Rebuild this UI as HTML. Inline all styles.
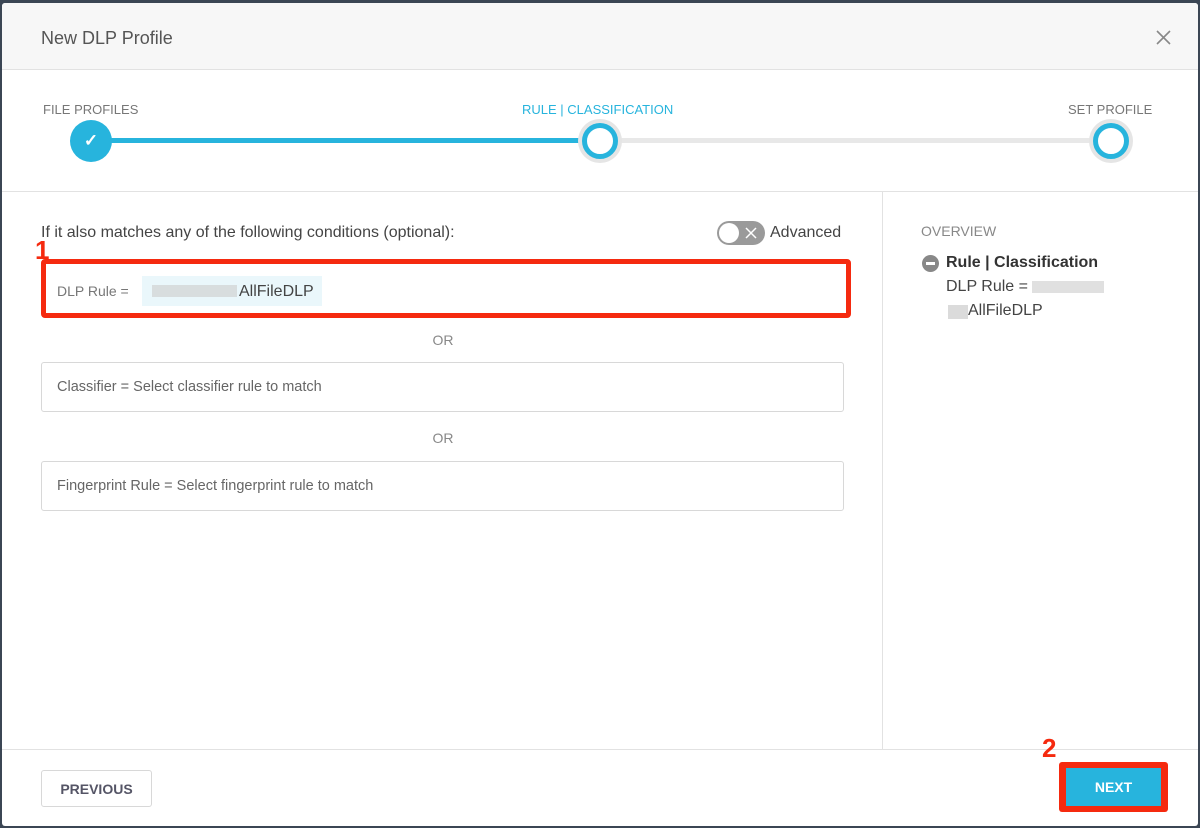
<!DOCTYPE html>
<html><head><style>
*{margin:0;padding:0;box-sizing:border-box}
body{width:1200px;height:828px;background:#3b4654;font-family:"Liberation Sans",sans-serif;position:relative;overflow:hidden}
.dlg{position:absolute;left:2px;top:3px;width:1196px;height:823px;background:#fff;border-radius:3px;overflow:hidden}
.hdr{position:absolute;left:0;top:0;width:100%;height:67px;background:#f7f7f7;border-bottom:1px solid #e2e2e2}
.abs{position:absolute}
.t{color:#555;font-size:18px}
.lbl{font-size:13px;color:#777}
.box{position:absolute;left:39px;width:803px;height:50px;border:1px solid #d8d8d8;border-radius:3px;font-size:14.5px;color:#666;padding:16px 15px}
.or{position:absolute;left:0;width:882px;text-align:center;font-size:14px;color:#888}
</style></head><body>
<div class="dlg">
<div class="hdr"></div>
<div class="abs t" style="left:39px;top:25px">New DLP Profile</div>
<svg class="abs" style="left:1154px;top:27px" width="15" height="15" viewBox="0 0 15 15"><path d="M1 1L14 14M14 1L1 14" stroke="#888" stroke-width="1.6"/></svg>
<div class="abs lbl" style="left:41px;top:99px;color:#777">FILE PROFILES</div>
<div class="abs lbl" style="left:520px;top:99px;color:#27b4dd">RULE | CLASSIFICATION</div>
<div class="abs lbl" style="left:1066px;top:99px;color:#777">SET PROFILE</div>
<div class="abs" style="left:89px;top:135px;width:510px;height:5px;background:#27b4dd"></div>
<div class="abs" style="left:598px;top:135px;width:510px;height:5px;background:#e8e8e8"></div>
<div class="abs" style="left:68px;top:117px;width:42px;height:42px;border-radius:50%;background:#27b4dd;color:#fff;text-align:center;line-height:42px;font-size:17px;font-weight:bold">&#10003;</div>
<div class="abs" style="left:576px;top:116px;width:44px;height:44px;border-radius:50%;background:#e5e5e5;padding:4px"><div style="width:36px;height:36px;border-radius:50%;border:5px solid #27b4dd;background:#fff"></div></div>
<div class="abs" style="left:1087px;top:116px;width:44px;height:44px;border-radius:50%;background:#e5e5e5;padding:4px"><div style="width:36px;height:36px;border-radius:50%;border:5px solid #27b4dd;background:#fff"></div></div>
<div class="abs" style="left:0;top:188px;width:100%;height:1px;background:#e2e2e2"></div>
<div class="abs" style="left:880px;top:189px;width:1px;height:557px;background:#e2e2e2"></div>
<div class="abs" style="left:0;top:746px;width:100%;height:1px;background:#e2e2e2"></div>
<div class="abs" style="left:39px;top:221px;font-size:16px;color:#444">If it also matches any of the following conditions (optional):</div>
<div class="abs" style="left:715px;top:218px;width:48px;height:24px;border-radius:12px;background:#9a9a9a"><div style="position:absolute;left:2px;top:2px;width:20px;height:20px;border-radius:50%;background:#fff"></div><svg style="position:absolute;left:28px;top:6px" width="12" height="12"><path d="M1 1L11 11M11 1L1 11" stroke="#fff" stroke-width="1.5"/></svg></div>
<div class="abs" style="left:768px;top:221px;font-size:16px;color:#444">Advanced</div>
<div class="abs" style="left:39px;top:256px;width:810px;height:59px;border:5px solid #f52a0f;border-radius:4px"></div>
<div class="abs" style="left:33px;top:232px;font-size:26px;font-weight:bold;color:#f52a0f">1</div>
<div class="abs" style="left:55px;top:280px;font-size:14px;color:#777">DLP Rule =</div>
<div class="abs" style="left:140px;top:273px;width:180px;height:30px;background:#eaf7fb"></div>
<div class="abs" style="left:150px;top:282px;width:85px;height:12px;background:#ccc;opacity:.6"></div>
<div class="abs" style="left:237px;top:280px;font-size:16px;color:#444">AllFileDLP</div>
<div class="or" style="top:329px">OR</div>
<div class="box" style="top:359px">Classifier = Select classifier rule to match</div>
<div class="or" style="top:427px">OR</div>
<div class="box" style="top:458px">Fingerprint Rule = Select fingerprint rule to match</div>
<div class="abs" style="left:919px;top:220px;font-size:14px;color:#888">OVERVIEW</div>
<div class="abs" style="left:920px;top:252px;width:17px;height:17px;border-radius:50%;background:#888"><div style="margin:7px 4px;width:9px;height:3px;background:#fff"></div></div>
<div class="abs" style="left:944px;top:251px;font-size:16px;font-weight:bold;color:#333">Rule | Classification</div>
<div class="abs" style="left:944px;top:275px;font-size:16px;color:#444">DLP Rule =</div>
<div class="abs" style="left:1030px;top:278px;width:72px;height:12px;background:#ccc;opacity:.6"></div>
<div class="abs" style="left:946px;top:302px;width:20px;height:14px;background:#ccc;opacity:.7"></div>
<div class="abs" style="left:966px;top:299px;font-size:16px;color:#444">AllFileDLP</div>
<div class="abs" style="left:39px;top:767px;width:111px;height:37px;border:1px solid #d8d8d8;border-radius:3px;text-align:center;line-height:36px;font-size:14px;font-weight:bold;color:#556">PREVIOUS</div>
<div class="abs" style="left:1040px;top:730px;font-size:26px;font-weight:bold;color:#f52a0f">2</div>
<div class="abs" style="left:1057px;top:759px;width:109px;height:50px;background:#f52a0f;border-radius:3px;padding:6px 7px"><div style="width:95px;height:38px;background:#27b4dd;color:#fff;text-align:center;line-height:38px;font-size:14px;font-weight:bold">NEXT</div></div>
</div>
</body></html>
